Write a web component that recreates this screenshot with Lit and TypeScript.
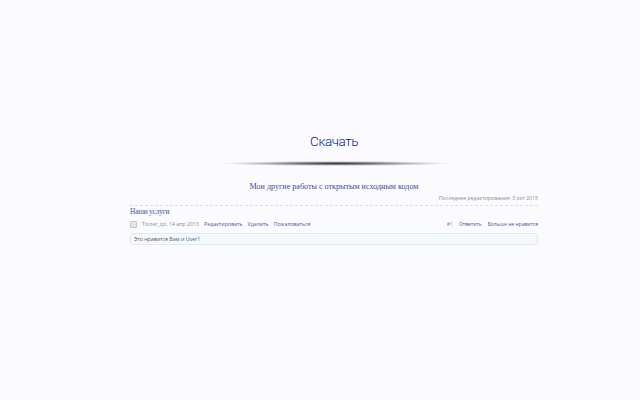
import { LitElement, html, css } from "lit";
import { customElement } from "lit/decorators.js";

@customElement("app-root")
export class AppRoot extends LitElement {
  static styles = css`
    :host { display: block; width: 640px; height: 400px; background: #fbfbff; overflow: hidden; font-family: "Open Sans", sans-serif; }
    .page { width: 408px; margin-left: 130px; display: flex; flex-direction: column; align-items: center; padding-top: 132px; }
    .download { font-family: Roboto, sans-serif; font-weight: 300; font-size: 13.5px; letter-spacing: -0.45px; line-height: 19px; color: #001a96; }
    .divider { width: 230px; height: 5px; margin-top: 10px; margin-left: 4px; background: radial-gradient(ellipse closest-side, #333 0%, #777 35%, rgba(170,170,175,.6) 70%, rgba(251,251,255,0) 100%); }
    .other { margin-top: 15px; font-family: "Liberation Serif", serif; font-size: 8.1px; line-height: 12px; color: #3c4a9a; }
    .post { width: 408px; margin-top: 1px; display: flex; flex-direction: column; font-size: 5.25px; color: #8a8a8a; }
    .edited { text-align: right; font-size: 5.2px; line-height: 9px; padding-bottom: 2px; border-bottom: 1px dashed #dcdfe5; }
    .title { font-family: "Liberation Serif", serif; font-size: 7.4px; letter-spacing: -0.2px; line-height: 11px; color: #3a55a5; }
    .meta { margin-top: 1px; display: flex; align-items: center; height: 12px; }
    .check { width: 5px; height: 5px; border: 1px solid #c4c4c4; border-radius: 1px; background: #e6e6e6; margin-right: 5px; }
    .author { margin-right: 5px; }
    a { color: #3a5aa5; margin-right: 5px; }
    .spacer { flex: 1; }
    .right { font-size: 5px; margin-right: 6px; }
    .right:last-child { margin-right: 0; }
    .likes { margin-top: 3px; height: 10px; border: 1px solid #dde9f3; border-radius: 3px; background: #f5f9fd; padding-left: 3px; display: flex; align-items: center; color: #555; }
    .likes a { margin: 0 0 0 1.5px; }
  `;
  render() {
    return html`<div class="page">
      <div class="download">Скачать</div>
      <div class="divider"></div>
      <div class="other">Мои другие работы с открытым исходным кодом</div>
      <div class="post">
        <div class="edited">Последнее редактирование: 3 окт 2015</div>
        <div class="title">Наши услуги</div>
        <div class="meta">
          <span class="check"></span>
          <span class="author">Tocter_tpl, 14 апр 2013</span>
          <a>Редактировать</a><a>Удалить</a><a>Пожаловаться</a>
          <span class="spacer"></span>
          <span class="right">#1</span><a class="right">Ответить</a><a class="right">Больше не нравится</a>
        </div>
        <div class="likes">Это нравится Вам и <a>User1</a></div>
      </div>
    </div>`;
  }
}
